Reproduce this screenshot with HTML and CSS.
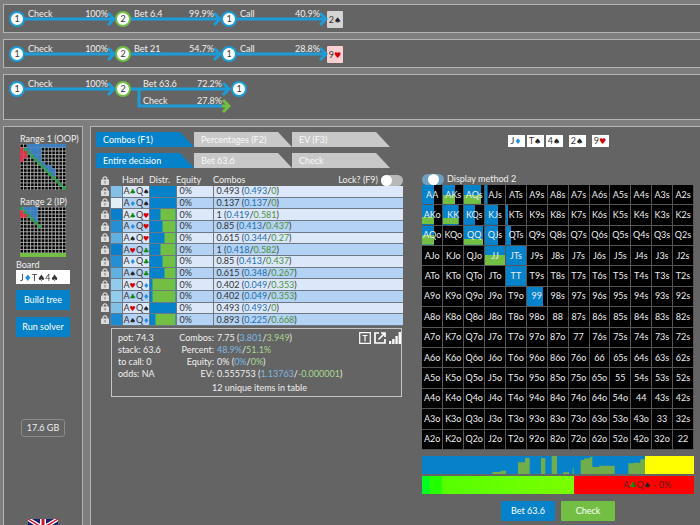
FILE: index.html
```html
<!DOCTYPE html>
<html lang="en">
<head>
  <meta charset="UTF-8">
  <meta name="viewport" content="width=device-width, initial-scale=1.0">
  <title>Solver</title>
  <link rel="stylesheet" href="styles.css">
</head>
<body>
  <svg width="0" height="0" class="defs">
    <symbol id="arrow" viewBox="0 0 91 17">
      <path d="M0 10H88" fill="none" stroke="#1c9dd9" stroke-width="3"/>
      <path d="M83 4L89 10L83 16" fill="none" stroke="#1c9dd9" stroke-width="3"/>
    </symbol>
    <symbol id="lock" viewBox="0 0 8 9">
      <path d="M2 4V2.800a2 2 0 0 1 4 0V4" fill="none" stroke="#dcdcdc" stroke-width="1.200"/>
      <rect x="0" y="3.500" width="8" height="5.500" rx="0.500" fill="#dcdcdc"/>
      <rect x="3.500" y="5" width="1" height="2.500" fill="#777"/>
    </symbol>
  </svg>

  <section class="history">
    <div class="street">
      <span class="node">1</span>
      <div class="edge"><svg class="arrow"><use href="#arrow"/></svg><span>Check</span><span>100%</span></div>
      <span class="node node-ip">2</span>
      <div class="edge"><svg class="arrow"><use href="#arrow"/></svg><span>Bet 6.4</span><span>99.9%</span></div>
      <span class="node">1</span>
      <div class="edge"><svg class="arrow"><use href="#arrow"/></svg><span>Call</span><span>40.9%</span></div>
      <span class="dealt">2<i class="s">♠</i></span>
    </div>
    <div class="street">
      <span class="node">1</span>
      <div class="edge"><svg class="arrow"><use href="#arrow"/></svg><span>Check</span><span>100%</span></div>
      <span class="node node-ip">2</span>
      <div class="edge"><svg class="arrow"><use href="#arrow"/></svg><span>Bet 21</span><span>54.7%</span></div>
      <span class="node">1</span>
      <div class="edge"><svg class="arrow"><use href="#arrow"/></svg><span>Call</span><span>28.8%</span></div>
      <span class="dealt dealt-red">9<i class="h">♥</i></span>
    </div>
    <div class="street street-current">
      <span class="node">1</span>
      <div class="edge"><svg class="arrow"><use href="#arrow"/></svg><span>Check</span><span>100%</span></div>
      <span class="node node-ip">2</span>
      <div class="branches">
        <svg class="arrow" viewBox="0 0 100 34">
          <path d="M0 10H97M8 10V27H91" fill="none" stroke="#1c9dd9" stroke-width="3"/>
          <path d="M92 4L98 10L92 16" fill="none" stroke="#1c9dd9" stroke-width="3"/>
          <path d="M91 27H97M92 21L98 27L92 33" fill="none" stroke="#72bf44" stroke-width="3"/>
        </svg>
        <div class="branch"><span>Bet 63.6</span><span>72.2%</span></div>
        <div class="branch"><span>Check</span><span>27.8%</span></div>
      </div>
      <span class="node">1</span>
    </div>
  </section>

  <div class="workspace">
    <aside class="sidebar">
      <div class="range">
        <span>Range 1 (OOP)</span>
        <svg class="range-map" id="range-oop" viewBox="0 0 13 13"></svg>
      </div>
      <div class="range range-ip">
        <span>Range 2 (IP)</span>
        <svg class="range-map" id="range-ip" viewBox="0 0 13 13"></svg>
        <div class="range-bar"></div>
      </div>
      <label class="board-label" for="board">Board</label>
      <div class="board"><input type="text" id="board" value="J♦T♠4♠"></div>
      <button type="button">Build tree</button>
      <button type="button">Run solver</button>
      <div class="memory">17.6 GB</div>
      <svg class="flag" viewBox="0 0 30 18">
        <rect width="30" height="18" fill="#1a1f6b"/>
        <path d="M0 0L30 18M30 0L0 18" stroke="#fff" stroke-width="4"/>
        <path d="M0 0L30 18M30 0L0 18" stroke="#d0142c" stroke-width="1.500"/>
        <path d="M15 0V18M0 9H30" stroke="#fff" stroke-width="6"/>
        <path d="M15 0V18M0 9H30" stroke="#d0142c" stroke-width="3"/>
      </svg>
    </aside>

    <main class="main">
      <section class="combos">
        <nav class="tabs">
          <a href="#combos" class="tab active">Combos (F1)</a>
          <a href="#percentages" class="tab">Percentages (F2)</a>
          <a href="#ev" class="tab">EV (F3)</a>
        </nav>
        <nav class="tabs">
          <a href="#all" class="tab active">Entire decision</a>
          <a href="#bet" class="tab">Bet 63.6</a>
          <a href="#check" class="tab">Check</a>
        </nav>

        <table class="hands">
          <thead>
            <tr>
              <th class="col-lock"><svg class="lock"><use href="#lock"/></svg></th>
              <th class="col-weight"></th>
              <th class="col-hand">Hand</th>
              <th class="col-distr">Distr.</th>
              <th class="col-equity">Equity</th>
              <th>
                <div class="combos-head">
                  <span>Combos</span>
                  <label for="lock-all">Lock? (F9)</label>
                  <input type="checkbox" id="lock-all" class="toggle">
                </div>
              </th>
            </tr>
          </thead>
          <tbody id="hands"></tbody>
        </table>

        <div class="summary">
          <div class="pot">
            <div>pot: 74.3</div>
            <div>stack: 63.6</div>
            <div>to call: 0</div>
            <div>odds: NA</div>
          </div>
          <div class="totals">
            <span>Combos:</span><span>7.75 (<b class="bet">3.801</b>/<b class="check">3.949</b>)</span>
            <span>Percent:</span><span><b class="bet">48.9%</b>/<b class="check">51.1%</b></span>
            <span>Equity:</span><span>0% (<b class="bet">0%</b>/<b class="check">0%</b>)</span>
            <span>EV:</span><span>0.555753 (<b class="bet">1.13763</b>/<b class="check">-0.000001</b>)</span>
          </div>
          <div class="tools">
            <button type="button" aria-label="Text">
              <svg viewBox="0 0 12 12"><path d="M0.700 0.700H11.300V11.300H0.700ZM3.500 3.500H8.500M6 3.500V9.500" fill="none" stroke="#fff" stroke-width="1.200"/></svg>
            </button>
            <button type="button" aria-label="Export">
              <svg viewBox="0 0 12 12"><path d="M5 1H1V11H11V7M7 1H11V5M11 1L4.500 7.500" fill="none" stroke="#fff" stroke-width="1.700"/></svg>
            </button>
            <button type="button" aria-label="Chart">
              <svg viewBox="0 0 12 12"><path d="M0 9H2.300V12H0ZM3.200 7H5.500V12H3.200ZM6.400 4H8.700V12H6.400ZM9.600 0H12V12H9.600Z" fill="#fff"/></svg>
            </button>
          </div>
          <p>12 unique items in table</p>
        </div>
      </section>

      <section class="strategy">
        <div class="cards">
          <span class="card">J<i class="d">♦</i></span>
          <span class="card">T<i class="s">♠</i></span>
          <span class="card">4<i class="s">♠</i></span>
          <span class="card card-gap">2<i class="s">♠</i></span>
          <span class="card card-gap">9<i class="h">♥</i></span>
        </div>
        <div class="display">
          <input type="checkbox" id="display" class="toggle toggle-blue" checked>
          <label for="display">Display method 2</label>
        </div>
        <table class="matrix"><tbody id="matrix"></tbody></table>
        <svg class="chart" viewBox="0 0 816 54" preserveAspectRatio="none">
          <rect width="816" height="54" fill="#0582ca"/>
          <path d="M211 54V48H236V44H252V54ZM288 54V19H309V6H323V54ZM357 54V6H370V54ZM389 54V0H405V54ZM423 54V49H441V54ZM452 54V37H455V54ZM476 54V12H487V7H505V2H511V33H532V29H578V54ZM619 54V22H635V20H655V10H669V54Z" fill="#72ad4c"/>
          <rect x="669" width="147" height="54" fill="#ff0"/>
        </svg>
        <div class="equity-bar">
          <div class="equity-good"></div>
          <div class="equity-bad">A<i class="c">♣</i>Q<i class="s">♠</i> - 0%</div>
        </div>
        <div class="actions">
          <button type="button">Bet 63.6</button>
          <button type="button" class="btn-check">Check</button>
        </div>
      </section>
    </main>
  </div>

  <script src="script.js"></script>
</body>
</html>
```

FILE: styles.css
```css
* {
  box-sizing: border-box;
}

body {
  margin: 0;
  height: 100vh;
  overflow: hidden;
  display: flex;
  flex-direction: column;
  gap: 6px;
  padding: 4px 0 0 3px;
  background: #7e7e7e;
  color: #f0f0f0;
  font-family: Lato, "DejaVu Sans", sans-serif;
  font-size: 9px;
  line-height: 12px;
}

.defs {
  position: absolute;
}

i {
  font-family: "DejaVu Sans", sans-serif;
  font-style: normal;
  font-size: 8px;
  line-height: 0;
}

.s { color: #222; }
.h { color: #d60000; }
.d { color: #1a8fe3; }
.c { color: #0a8a0a; }

button {
  height: 20px;
  padding: 0;
  border: none;
  background: #0582ca;
  color: #fff;
  font: inherit;
  cursor: pointer;
}

/* History */
.history {
  display: flex;
  flex-direction: column;
  gap: 6px;
}

.street {
  display: flex;
  align-items: flex-start;
  height: 29px;
  padding: 6px 5px;
  background: #646464;
  border: 1px solid #b4b4b4;
  border-right: none;
}

.street-current {
  height: 46px;
}

.node {
  width: 16px;
  height: 16px;
  border: 2px solid #1c9dd9;
  border-radius: 50%;
  background: #fff;
  color: #333;
  line-height: 12px;
  text-align: center;
}

.node-ip {
  border-color: #72bf44;
}

.edge {
  position: relative;
  display: flex;
  justify-content: space-between;
  width: 90px;
  height: 17px;
  padding: 0 7px 0 3px;
  line-height: 6px;
}

.arrow {
  position: absolute;
  left: 0;
  top: -2px;
  width: 91px;
  height: 17px;
}

.edge span,
.branch span {
  position: relative;
}

.dealt {
  width: 16px;
  height: 17px;
  border-radius: 1px;
  background: #d4d4d4;
  color: #333;
  line-height: 17px;
  text-align: center;
}

.dealt-red {
  background: #fbd0d0;
}

.branches {
  position: relative;
  width: 100px;
  padding: 0 9px 0 12px;
}

.branches .arrow {
  width: 100px;
  height: 34px;
}

.branch {
  display: flex;
  justify-content: space-between;
  height: 17px;
  line-height: 6px;
}

/* Workspace */
.workspace {
  flex: 1;
  min-height: 0;
  display: flex;
  gap: 7px;
}

.sidebar {
  flex: none;
  width: 80px;
  display: flex;
  flex-direction: column;
  padding: 6px 12px 0;
  background: #646464;
  border: 1px solid #b4b4b4;
  border-bottom: none;
}

.sidebar > * {
  flex: none;
}

.range {
  display: flex;
  flex-direction: column;
  padding-left: 4px;
  line-height: 11px;
  white-space: nowrap;
}

.range-ip {
  margin-top: 6px;
}

.range-map {
  width: 46px;
  height: 46px;
}

.range-bar {
  width: 46px;
  height: 4px;
  background: #72bf44;
}

.board-label {
  margin-top: 2px;
  line-height: 11px;
}

.board {
  height: 14px;
  margin-bottom: 6px;
  background: #fff;
}

/* suit colours are painted through the text */
.board input {
  display: block;
  width: 100%;
  height: 14px;
  padding: 0 4px;
  border: none;
  background: linear-gradient(to right, #333 8px, #1a8fe3 8px, #1a8fe3 14px, #333 14px);
  -webkit-background-clip: text;
  background-clip: text;
  color: transparent;
  font: inherit;
}

.sidebar button {
  margin-bottom: 7px;
}

.memory {
  align-self: center;
  margin-top: 75px;
  padding: 2px 5px;
  border: 1px solid #8c8c8c;
  border-radius: 3px;
}

.flag {
  align-self: center;
  width: 30px;
  height: 18px;
  margin-top: 82px;
}

.main {
  flex: 1;
  display: grid;
  grid-template-columns: 307fr 272fr;
  gap: 19px;
  padding: 5px 6px 0 5px;
  background: #646464;
  border: 1px solid #b4b4b4;
  border-right: none;
  border-bottom: none;
}

.tabs {
  display: flex;
  margin-bottom: 6px;
}

.tab {
  width: 98px;
  height: 15px;
  padding-left: 7px;
  background: #c8c8c8;
  color: #f8f8f8;
  line-height: 15px;
  text-decoration: none;
  clip-path: polygon(0 0, 84px 0, 100% 100%, 0 100%);
}

.tab.active {
  background: #0582ca;
  color: #fff;
}

/* Combos table */
.hands {
  width: calc(100% - 5px);
  height: 152px;
  margin-left: 5px;
  border-collapse: collapse;
  table-layout: fixed;
}

.hands th,
.hands td {
  padding: 0;
  font-weight: normal;
  text-align: left;
  line-height: 10px;
  white-space: nowrap;
}

.hands th {
  height: 12px;
}

.hands td {
  border: 1px solid #6e7884;
  border-width: 0 0 1px 1px;
  padding-left: 3px;
  color: #333;
}

.hands i {
  font-size: 7px;
}

.hands tbody tr {
  background: #dce8fa;
}

.hands tbody tr:nth-child(even) {
  background: #b4d2f4;
}

.hands .col-lock {
  width: 9px;
  padding: 0;
  border: none;
  background: #646464;
}

.col-weight { width: 12px; }
.col-hand { width: 27px; }
.col-distr { width: 27px; }
.col-equity { width: 37px; }

.hands td.col-hand {
  padding-left: 1px;
}

.lock {
  display: block;
  width: 8px;
  height: 9px;
}

.hands .bet { color: #1b6fae; }
.hands .check { color: #4c8f3a; }

b {
  font-weight: normal;
}

.combos-head {
  display: flex;
  align-items: center;
  gap: 3px;
}

.combos-head span {
  flex: 1;
}

.toggle {
  appearance: none;
  display: flex;
  width: 22px;
  height: 11px;
  margin: 0;
  border-radius: 6px;
  background: #b8b8b8;
}

.toggle::before {
  content: "";
  width: 11px;
  height: 11px;
  border-radius: 50%;
  background: #fff;
}

.toggle-blue {
  justify-content: center;
  background: #6d9fbe;
}

/* Summary */
.summary {
  display: grid;
  grid-template-columns: 60px 1fr auto;
  margin: 2px 1px 0 15px;
  padding: 3px 0 2px 6px;
  border: 1px solid #c4c4c4;
}

.totals {
  display: grid;
  grid-template-columns: 36px 1fr;
  column-gap: 3px;
  white-space: nowrap;
}

.totals span:nth-child(odd) {
  text-align: right;
}

.summary .bet { color: #7db8e0; }
.summary .check { color: #a9d890; }

.tools {
  display: flex;
  gap: 3px;
  align-items: flex-start;
}

.tools button {
  width: 12px;
  height: 12px;
  background: none;
}

.tools svg {
  display: block;
  width: 12px;
  height: 12px;
}

.summary p {
  grid-column: 1 / -1;
  margin: 2px 0 0;
  text-align: center;
}

/* Strategy */
.strategy {
  padding-top: 3px;
}

.cards {
  display: flex;
  justify-content: center;
  gap: 2px;
  height: 12px;
}

.card {
  width: 17px;
  background: #fff;
  color: #333;
  text-align: center;
}

.card-gap {
  margin-left: 4px;
}

.display {
  display: flex;
  align-items: center;
  gap: 3px;
  height: 12px;
  margin-top: 26px;
}

.matrix {
  width: 100%;
  height: 265px;
  border-collapse: collapse;
  table-layout: fixed;
  background: #000;
}

.matrix td {
  padding: 0;
  border: 1px solid #555;
  border-width: 0 1px 1px 0;
  background-repeat: no-repeat;
  background-position: left bottom;
  color: #eee;
  text-align: center;
}

.chart {
  display: block;
  width: 100%;
  height: 18px;
  margin-top: 6px;
}

.equity-bar {
  display: flex;
  height: 18px;
  margin-top: 2px;
}

.equity-good {
  width: 56%;
  background: linear-gradient(to right, #0f2 7px, #2f0 7px, #2f0 20px, #5f0 20px, #7f0 90%);
}

.equity-bad {
  flex: 1;
  padding-left: 26px;
  background: #f00;
  color: #58201c;
  line-height: 18px;
  text-align: center;
}

.actions {
  display: flex;
  justify-content: center;
  gap: 6px;
  margin-top: 7px;
}

.actions button {
  width: 54px;
  border-radius: 1px;
}

.actions .btn-check {
  background: #72bf44;
}
```

FILE: script.js
```js
const ranks = 'AKQJT98765432';
const suits = { s: '♠', h: '♥', d: '♦', c: '♣' };

// [hand, combos, bet, check, weight colour]
const hands = [
  ['AcQs', '0.493', '0.493', '0', '#84c0e6'],
  ['AdQs', '0.137', '0.137', '0', '#e0eff8'],
  ['AcQh', '1', '0.419', '0.581', '#0a80cc'],
  ['AdQh', '0.85', '0.413', '0.437', '#2490d3'],
  ['AsQh', '0.615', '0.344', '0.27', '#62b0e0'],
  ['AhQc', '1', '0.418', '0.582', '#0a80cc'],
  ['AdQc', '0.85', '0.413', '0.437', '#2490d3'],
  ['AsQc', '0.615', '0.348', '0.267', '#62b0e0'],
  ['AhQd', '0.402', '0.049', '0.353', '#94cbea'],
  ['AcQd', '0.402', '0.049', '0.353', '#94cbea'],
  ['AhQs', '0.493', '0.493', '0', '#84c0e6'],
  ['AsQd', '0.893', '0.225', '0.668', '#1c8cd2']
];

function card(rank, suit) {
  return `${rank}<i class="${suit}">${suits[suit]}</i>`;
}

function split(bet, total) {
  const share = Math.round(bet / total * 100);
  return `background: linear-gradient(to right, #0582ca ${share}%, #72bf44 ${share}%)`;
}

document.getElementById('hands').innerHTML = hands.map(([hand, total, bet, check, color]) => `
  <tr>
    <td class="col-lock"><svg class="lock"><use href="#lock"/></svg></td>
    <td style="background: ${color}"></td>
    <td class="col-hand">${card(hand[0], hand[1])}${card(hand[2], hand[3])}</td>
    <td style="${split(bet, total)}"></td>
    <td>0%</td>
    <td>${total} (<b class="bet">${bet}</b>/<b class="check">${check}</b>)</td>
  </tr>`).join('');

// [width of the range, share of check] in percent
const strategy = {
  AA: [60, 0], AKs: [60, 50], AQs: [87, 47], AJs: [13, 0],
  AKo: [60, 37], KK: [78, 32], KQs: [57, 0], KJs: [65, 0], KTs: [10, 0],
  AQo: [60, 50], QQ: [97, 30], QJs: [67, 0], QTs: [27, 0],
  JJ: [100, 57], JTs: [100, 0], TT: [100, 0], 99: [82, 0]
};

function cellName(row, col) {
  if (row === col) return ranks[row] + ranks[row];
  return row < col ? ranks[row] + ranks[col] + 's' : ranks[col] + ranks[row] + 'o';
}

let matrix = '';
for (let row = 0; row < 13; row++) {
  matrix += '<tr>';
  for (let col = 0; col < 13; col++) {
    const name = cellName(row, col);
    const s = strategy[name];
    const style = s ? ` style="background-image: linear-gradient(#72bf44, #72bf44), linear-gradient(#0582ca, #0582ca); background-size: ${s[0]}% ${s[1]}%, ${s[0]}% 100%"` : '';
    matrix += `<td${style}>${name}</td>`;
  }
  matrix += '</tr>';
}
document.getElementById('matrix').innerHTML = matrix;

// Small range previews: b = suited, r = offsuit, g = pair
function drawRange(id, rows) {
  const colors = { b: '#3a7fc4', r: '#e0304a', g: '#2a9d4a' };
  let svg = '<rect width="13" height="13" fill="#000"/>';
  for (let i = 0; i <= 13; i++) {
    svg += `<path d="M${i} 0V13M0 ${i}H13" stroke="#b8b8b8" stroke-width="0.25"/>`;
  }
  rows.forEach((row, y) => {
    [...row].forEach((c, x) => {
      if (colors[c]) svg += `<rect x="${x}" y="${y}" width="1" height="1" fill="${colors[c]}"/>`;
    });
  });
  document.getElementById(id).innerHTML = svg;
}

drawRange('range-oop', [
  '..bbbbbbbbbbb',
  'rgbbbb.......',
  'rrgbbb.......',
  'rr.gbb.......',
  'r...gb.......',
  '.....gb......',
  '......gbb....',
  '.......gbb...',
  '........gb...',
  '.........g...',
  '..........g..',
  '...........g.',
  '............g'
]);
drawRange('range-ip', [
  'gbbbb........',
  'rgbbb........',
  'rrgbb........',
  '...gb........',
  '....g........',
  '.....g.......',
  '.............',
  '.............',
  '.............',
  '.............',
  '.............',
  '.............',
  '.............'
]);
```
